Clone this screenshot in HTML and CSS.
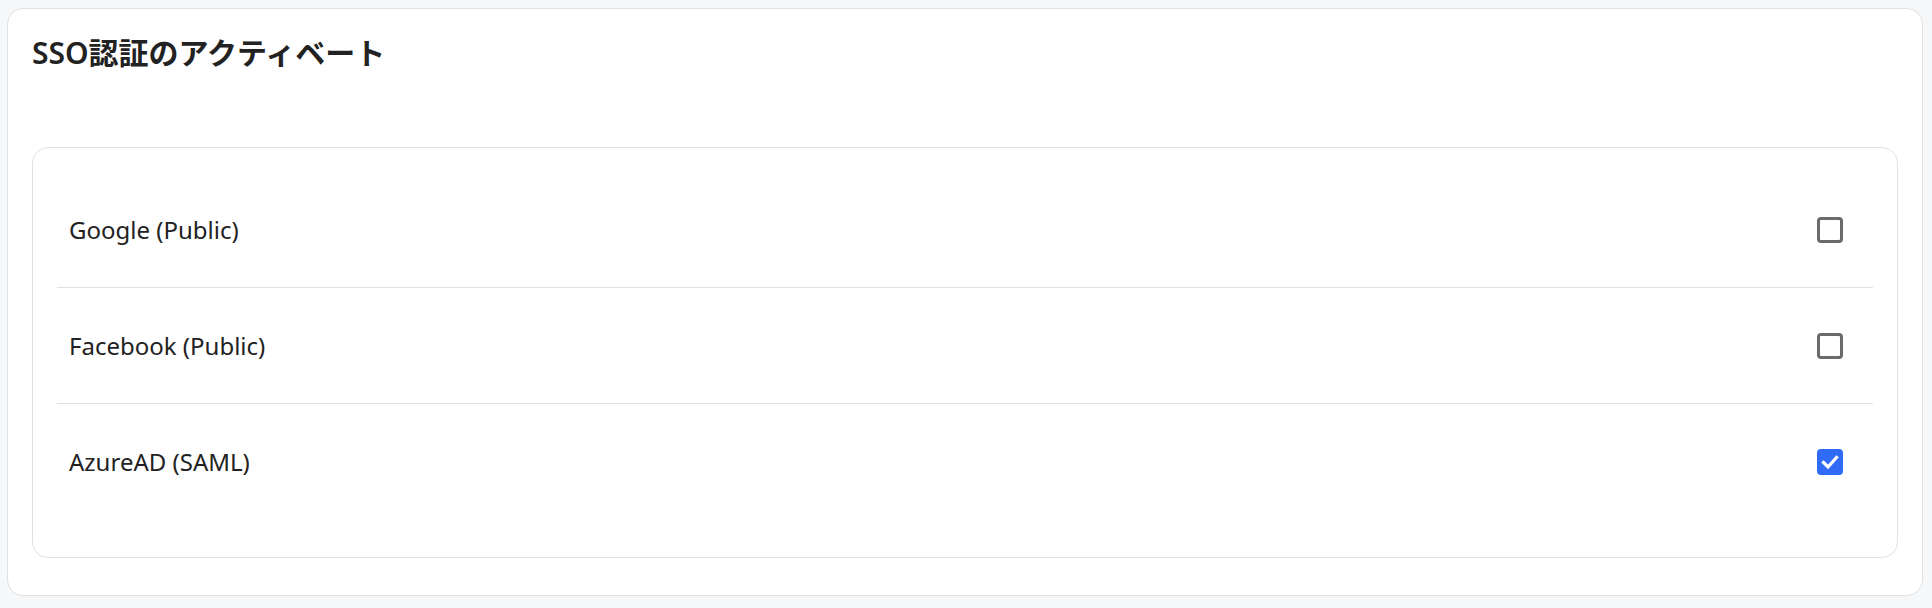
FILE: index.html
```html
<!DOCTYPE html>
<html lang="ja">
<head>
<meta charset="utf-8">
<title>SSO認証のアクティベート</title>
<link rel="stylesheet" href="styles.css">
</head>
<body>
<section class="panel">
  <h1 class="panel-title">SSO認証のアクティベート</h1>
  <div class="list-card">
    <div class="row">
      <span class="row-label">Google (Public)</span>
      <span class="checkbox"></span>
    </div>
    <div class="row">
      <span class="row-label">Facebook (Public)</span>
      <span class="checkbox"></span>
    </div>
    <div class="row">
      <span class="row-label">AzureAD (SAML)</span>
      <span class="checkbox checked">
        <svg viewBox="0 0 26 26" width="26" height="26"><path d="M6.5 13.5 L11 18 L19.5 8.5" fill="none" stroke="#fff" stroke-width="3.2" stroke-linecap="square" stroke-linejoin="miter"/></svg>
      </span>
    </div>
  </div>
</section>
</body>
</html>
```
FILE: styles.css
```css
html, body {
  margin: 0;
  padding: 0;
}
body {
  background: #f6f7f9;
  font-family: "Noto Sans", "Noto Sans CJK JP", sans-serif;
  color: #222;
  padding: 8px 9px 12px 7px;
}
.panel {
  background: #fff;
  border: 1px solid #e1e1e3;
  border-radius: 16px;
  padding: 23px 24px 36px 24px;
  height: 588px;
  box-sizing: border-box;
}
.panel-title {
  margin: 0 0 73px 0;
  font-size: 30px;
  line-height: 42px;
  font-weight: 600;
  color: #222;
}
.list-card {
  border: 1px solid #e1e1e3;
  border-radius: 16px;
  padding: 24px 24px 38px 24px;
}
.row {
  display: flex;
  align-items: center;
  justify-content: space-between;
  height: 116px;
  box-sizing: border-box;
  padding: 0 30px 0 12px;
  border-bottom: 1px solid #e1e1e3;
}
.row:last-child {
  border-bottom: none;
  height: 115px;
}
.row-label {
  font-size: 24px;
  color: #222;
}
.checkbox {
  width: 26px;
  height: 26px;
  box-sizing: border-box;
  border: 3px solid #6b6b6b;
  border-radius: 4px;
  display: block;
}
.checkbox.checked {
  background: #2f6bf4;
  border-color: #2f6bf4;
  position: relative;
}
.checkbox.checked svg {
  position: absolute;
  left: -3px;
  top: -3px;
}
```
